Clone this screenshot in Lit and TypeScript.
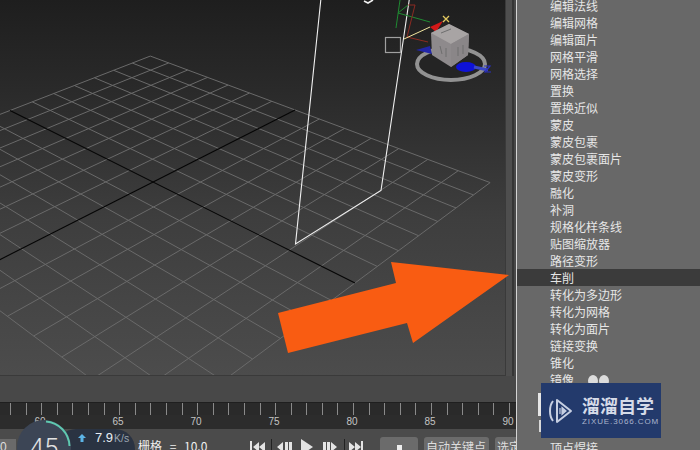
import { LitElement, html, css, svg } from "lit";
import { customElement } from "lit/decorators.js";

const H = (u: number, v: number): [number, number] => {
  const w = -0.171 * u - 0.154 * v + 1;
  return [(141.3 * u - 187.5 * v + 153) / w, (52.6 * u + 55.1 * v + 182) / w];
};
const N = 7;
const gridLines = () => {
  const soft = [];
  const axes = [];
  for (let i = -N; i <= N; i++) {
    const t = i / N;
    const [a, b] = H(t, -1);
    const [c, d] = H(t, 1);
    const [e, f] = H(-1, t);
    const [g, h] = H(1, t);
    const target = i === 0 ? axes : soft;
    const cls = i === 0 ? "axis" : "grid";
    target.push(svg`<line class=${cls} x1=${a} y1=${b} x2=${c} y2=${d}></line>`);
    target.push(svg`<line class=${cls} x1=${e} y1=${f} x2=${g} y2=${h}></line>`);
  }
  return svg`<g class="soft">${soft}</g>${axes}`;
};

const MENU = ["编辑法线","编辑网格","编辑面片","网格平滑","网格选择","置换","置换近似","蒙皮","蒙皮包裹","蒙皮包裹面片","蒙皮变形","融化","补洞","规格化样条线","贴图缩放器","路径变形","车削","转化为多边形","转化为网格","转化为面片","链接变换","锥化","镜像","","","","顶点焊接"];
const TICKS = Array.from({ length: 33 }, (_, i) => i);
const LABELS = ["60", "65", "70", "75", "80", "85", "90"];

@customElement("app-root")
export class AppRoot extends LitElement {
  static styles = css`
    :host { display: block; width: 700px; height: 450px; overflow: hidden; position: relative; background: #4a4a4a;
      font-family: "Noto Sans CJK SC", "Liberation Sans", sans-serif; }
    .page { display: grid; grid-template-columns: 516px 1px 183px; height: 450px; }
    .left { display: flex; flex-direction: column; height: 450px; overflow: hidden; }
    .viewRow { display: flex; height: 376px; flex: none; }
    .view { width: 505px; height: 375px; border-bottom: 1px solid #3a3a3a; border-right: 1px solid #3a3a3a; background: linear-gradient(#1e1e1e 0, #2a2a2a 90px, #3e3e3e 220px, #4c4c4c 375px); }
    .view svg { display: block; }
    .soft { filter: blur(0.3px); }
    .grid { stroke: #6a6a6a; stroke-width: 1; }
    .axis { stroke: #050505; stroke-width: 1.1; }
    .wire { fill: none; stroke: #f0f0f0; stroke-width: 1.1; }
    .nick { fill: none; stroke: #f0f0f0; stroke-width: 1.6; }
    .side { flex: 1; background: linear-gradient(90deg, #4e4e4e 0 6px, #353535 6px 8px, #484848 8px); }
    .strip { height: 26px; flex: none; background: #484848; }
    .timeline { height: 26px; flex: none; background: #2c2c2c; border-top: 1px solid #1f1f1f; display: flex; flex-direction: column; overflow: hidden; }
    .ticks { display: flex; height: 12px; padding-left: 10px; gap: 14.6px; background: #2a2a2a; }
    .tick { width: 1px; background: #8a8a8a; flex: none; }
    .labels { display: flex; padding-left: 1px; font-size: 10px; line-height: 13px; color: #c4c4c4; font-family: "Liberation Sans", sans-serif; }
    .labels span { width: 78px; text-align: center; flex: none; }
    .bar { height: 22px; flex: none; display: flex; align-items: flex-start; background: #4b4b4b; color: #e8e8e8; font-size: 12px; }
    .num { width: 16px; height: 12px; background: #6a6a6a; color: #ddd; line-height: 16px; flex: none; margin-top: 10px; font-family: "Liberation Sans", sans-serif; }
    .gridLabel { margin-left: 122px; line-height: 34px; font-size: 12px; white-space: nowrap; width: 112px; color: #eee; word-spacing: 5px; flex: none; }
    .transport { margin-top: 10px; display: block; flex: none; }
    .key { width: 38px; height: 14px; margin: 8px 0 0 0; background: #6b6b6b; border-radius: 3px 3px 0 0; flex: none; display: flex; justify-content: center; padding-top: 8px; }
    .key i { width: 5px; background: #eee; display: block; height: 8px; }
    .btn { height: 22px; margin: 8px 0 0 6px; background: #6b6b6b; color: #ddd; font-size: 12px; line-height: 20px; padding: 0 2px; border-radius: 3px 3px 0 0; white-space: nowrap; flex: none; box-sizing: border-box; }
    .btn.auto { width: 65px; }
    .btn.sel { width: 28px; overflow: hidden; }
    .rule { background: #d4d4d4; }
    .menu { background: #686868; height: 450px; overflow: hidden; font-size: 12px; color: #e6e6e6; }
    .list { margin-top: -3px; }
    .item { height: 17px; line-height: 17px; padding-left: 33px; white-space: nowrap; }
    .item.on { background: #3b3b3b; }
    .arrow, .gizmo { position: absolute; left: 0; top: 0; pointer-events: none; }
    .cube { filter: blur(0.45px); }
    .speed { position: absolute; left: 0; top: 0; width: 140px; height: 450px; pointer-events: none; }
    .pill { position: absolute; left: 56px; top: 429px; width: 79px; height: 40px; border-radius: 20px; background: #2a3342; color: #e8edf2; font-size: 13px; line-height: 18px; font-family: "Liberation Sans", sans-serif; padding-left: 39px; box-sizing: border-box; white-space: nowrap; }
    .pill small { font-size: 10.5px; color: #9aa6b2; margin-left: 1px; }
    .dial { position: absolute; left: 17px; top: 420px; width: 54px; height: 54px; border-radius: 50%; background: #3c4555; text-align: center; color: #e2e2e2; font: 300 26px/56px Roboto, "Liberation Sans", sans-serif; }
    .dial svg { position: absolute; left: 0; top: 0; }
    .up { position: absolute; left: 77px; top: 433px; }
    .dots { position: absolute; left: 588px; top: 375px; display: flex; gap: 1px; }
    .dots i { width: 10px; height: 12px; border-radius: 50%; background: #dcdcdc; display: block; }
    .stub { position: absolute; left: 538px; top: 393px; width: 4px; height: 23px; background: #e6e6e6; }
    .stub.low { left: 539px; top: 420px; width: 2px; height: 12px; background: #d8d8d8; }
    .mark { position: absolute; left: 541px; top: 383px; width: 120px; height: 55px; background: #233a6c; display: flex; align-items: center; color: #d5dbe8; }
    .mark svg { margin-left: 8px; flex: none; }
    .markText { margin-left: 9px; }
    .markTitle { font-size: 18px; line-height: 20px; font-weight: 700; white-space: nowrap; width: 73px; overflow: visible; }
    .markUrl { font: 8px/10px "Liberation Sans", sans-serif; letter-spacing: 0.9px; margin-top: 2px; color: #aab5cc; white-space: nowrap; }
  `;

  render() {
    return html`
      <div class="page">
        <div class="left">
          <div class="viewRow">
            <div class="view">
              <svg width="505" height="375" viewBox="0 0 505 375">
                ${gridLines()}
                <path class="wire" d="M321 -2 L295.500 244 L381 190.500 L409.500 -2"></path>
                <path class="nick" d="M364 1 L368 3 L373 0"></path>
              </svg>
            </div>
            <div class="side"></div>
          </div>
          <div class="strip"></div>
          <div class="timeline">
            <div class="ticks">${TICKS.map(() => html`<span class="tick"></span>`)}</div>
            <div class="labels">${LABELS.map((l) => html`<span>${l}</span>`)}</div>
          </div>
          <div class="bar">
            <span class="num">0</span>
            <span class="gridLabel">栅格 = 10.0</span>
            <svg class="transport" width="130" height="16" viewBox="0 0 130 16" fill="#e4e4e4">
              <path d="M0 2h2v12H0zM9 3v10L3 8zM15 3v10L9 8z"></path>
              <rect x="21" y="0" width="1" height="16" fill="#222"></rect>
              <path d="M33 3v10L27 8zM35 3h3v10h-3zM39 3h3v10h-3z"></path>
              <path d="M51 0l12 8-12 8z"></path>
              <path d="M73 3h3v10h-3zM77 3h3v10h-3zM81 3l6 5-6 5z"></path>
              <rect x="94" y="0" width="1" height="16" fill="#222"></rect>
              <path d="M99 3l6 5-6 5zM105 3l6 5-6 5zM111 2h2v12h-2z"></path>
            </svg>
            <span class="key"><i></i></span>
            <span class="btn auto">自动关键点</span>
            <span class="btn sel">选定</span>
          </div>
        </div>
        <div class="rule"></div>
        <div class="menu">
          <div class="list">
            ${MENU.map((m) => html`<div class="item ${m === "车削" ? "on" : ""}">${m}</div>`)}
          </div>
        </div>
      </div>

      <svg class="gizmo" width="520" height="90" viewBox="0 0 520 90">
        <g fill="none" stroke-width="1">
          <path d="M400 0L396 28M398 13L408 5M398 13L430 22" stroke="#1f8a32"></path>
          <path d="M415 5L407 37L428 42M408 5L415 5" stroke="#8c2a22"></path>
        </g>
        <rect x="385.500" y="37.500" width="15" height="15" fill="none" stroke="#a0a0a0" stroke-width="1.2"></rect>
        <path d="M404 39L430 27" stroke="#f2e6a0" stroke-width="1"></path>
        <path d="M430 27L443 21L436 32Z" fill="#d41818"></path>
        <path d="M443 16L449 22M449 16L443 22" stroke="#e2c860" stroke-width="1.3"></path>
        <g class="cube">
          <ellipse cx="451" cy="64" rx="34" ry="16" fill="#242424" stroke="#929292" stroke-width="4"></ellipse>
          <ellipse cx="466" cy="67" rx="10" ry="5" fill="#0e12d8"></ellipse>
          <path d="M474 67L488 70" stroke="#3a48c8" stroke-width="3"></path>
          <path d="M416 50L430 46L432 54Z" fill="#2226a8"></path>
          <path d="M484 66h6l-5 6h6" fill="none" stroke="#2a30c0" stroke-width="1.2"></path>
          <path d="M449 24L469 34L468 55L451 67L432 55L431 33Z" fill="#8e8a8c"></path>
          <path d="M431 33L449 24L469 34L451 44Z" fill="#a8a4a4"></path>
          <path d="M451 44L469 34L468 55L451 67Z" fill="#8a8688"></path>
          <path d="M440 46l2 8M446 48v9M458 47v9M463 45v9M441 33l10-4" stroke="#6e6e6e" stroke-width="1" fill="none"></path>
        </g>
      </svg>

      <svg class="arrow" width="520" height="370" viewBox="0 0 520 370">
        <path d="M278 313L396 283L391 262L509 275L413 343L407 323L288 353Z" fill="#f95c12"></path>
      </svg>

      <div class="speed">
        <div class="pill">7.9<small>K/s</small></div>
        <svg class="up" width="10" height="10" viewBox="0 0 10 10"><path d="M5 1l4 4H6.500v4h-3V5H1z" fill="#5cb4e6"></path></svg>
        <div class="dial">45
          <svg width="54" height="54" viewBox="0 0 54 54"><path d="M29 1.500A25.500 25.500 0 0 1 52.500 26" fill="none" stroke="#5fc8b0" stroke-width="2"></path></svg>
        </div>
      </div>

      <div class="dots"><i></i><i></i></div>
      <div class="stub"></div>
      <div class="stub low"></div>
      <div class="mark">
        <svg width="24" height="28" viewBox="0 0 24 28" fill="none" stroke="#c6cfe2" stroke-width="2">
          <path d="M4 4C0 9 0 19 4 24"></path>
          <path d="M8 3L22 14L8 25Z" stroke-linejoin="round"></path>
          <path d="M11 11v6M13 10.500l4 3.500-4 3.500z" stroke-width="1.200" fill="#c6cfe2"></path>
        </svg>
        <div class="markText">
          <div class="markTitle">溜溜自学</div>
          <div class="markUrl">ZIXUE.3066.COM</div>
        </div>
      </div>
    `;
  }
}
